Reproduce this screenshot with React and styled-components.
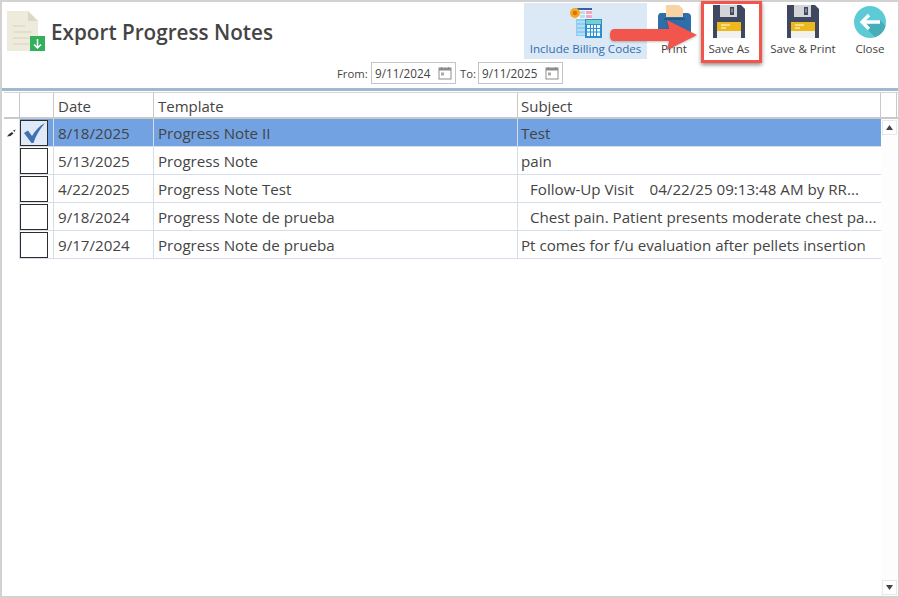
import React from "react";
import styled, { createGlobalStyle } from "styled-components";

const Global = createGlobalStyle`
  html, body { margin: 0; padding: 0; background: #fff; }
  #root { width: 899px; height: 598px; overflow: hidden; }
`;

const Window = styled.div`
  position: relative;
  box-sizing: border-box;
  width: 899px;
  height: 598px;
  border: solid #d2d2d2;
  border-width: 2px 1px 2px 2px;
  background: #fff;
  font-family: "Open Sans", "Noto Sans", sans-serif;
  color: #444;
  display: flex;
  flex-direction: column;
`;

const Header = styled.header`
  height: 86px;
  flex: none;
  border-bottom: 3px solid #a0b8d2;
  display: flex;
  flex-direction: column;
`;

const TopRow = styled.div`
  height: 59px;
  display: flex;
  justify-content: space-between;
  padding-top: 1px;
`;

const TitleGroup = styled.div`
  display: flex;
  align-items: flex-start;
  padding: 8px 0 0 5px;
  gap: 5px;
`;

const Title = styled.h1`
  margin: 6px 0 0;
  font-size: 20.7px;
  line-height: 30px;
  font-weight: 600;
  color: #444;
`;

const Toolbar = styled.div`
  display: flex;
  padding-right: 7px;
`;

const ToolButton = styled.div`
  width: ${(p) => p.$w}px;
  height: 56px;
  display: flex;
  flex-direction: column;
  align-items: center;
  background: ${(p) => (p.$active ? "#dbe8f6" : "transparent")};
  color: ${(p) => (p.$active ? "#2f6fb0" : "#444")};
  font-size: 11.6px;
  line-height: 16px;
  white-space: nowrap;
`;

const ToolIcon = styled.div`
  box-sizing: border-box;
  height: 38px;
  padding-top: ${(p) => p.$top}px;
  display: flex;
  align-items: flex-start;
  justify-content: center;
`;

const DateRow = styled.div`
  display: flex;
  justify-content: center;
  align-items: center;
  height: 22px;
  font-size: 11.3px;
  color: #444;
`;

const DateLabel = styled.span`
  width: ${(p) => p.$w}px;
  margin-left: ${(p) => p.$gap || 0}px;
`;

const DateBox = styled.div`
  box-sizing: border-box;
  width: 85px;
  height: 22px;
  border: 1px solid #c4c4c4;
  display: flex;
  align-items: center;
  justify-content: space-between;
  padding: 0 3px;
  font-size: 11.7px;
`;

const Grid = styled.div`
  flex: 1;
  position: relative;
  display: flex;
  flex-direction: column;
  margin-top: 1px;
  padding-left: 2px;
`;

const HeadRow = styled.div`
  display: grid;
  grid-template-columns: 16px 34px 100px 364px 363px 16px;
  height: 24px;
  border-top: 1px solid #d5d5d5;
  border-bottom: 2px solid #c9c9c9;
`;

const HeadCell = styled.div`
  box-sizing: border-box;
  border-right: 1px solid #c9c9c9;
  padding-left: ${(p) => p.$pad ?? 4}px;
  font-size: 15px;
  line-height: 26px;
  color: #444;
`;

const BodyWrap = styled.div`
  display: flex;
  flex: 1;
`;

const Rows = styled.div`
  width: 877px;
`;

const Row = styled.div`
  display: grid;
  grid-template-columns: 16px 34px 100px 364px 363px;
  height: 28px;
`;

const IndicatorCell = styled.div`
  display: flex;
  align-items: center;
  justify-content: center;
  padding-right: 1px;
  border-right: 1px solid #d5dde8;
  box-sizing: border-box;
`;

const CheckCell = styled.div`
  box-sizing: border-box;
  display: flex;
  align-items: center;
  border-right: 1px solid #d5dde8;
  border-bottom: 1px solid #d5dde8;
  background: ${(p) => (p.$sel ? "#72a2e1" : "#fff")};
`;

const CheckBox = styled.div`
  box-sizing: border-box;
  width: 28px;
  height: 26px;
  border: 1px solid #2c2c2c;
  background: ${(p) => (p.$on ? "#dfe9f7" : "#fff")};
  display: flex;
  align-items: center;
  justify-content: center;
`;

const Cell = styled.div`
  box-sizing: border-box;
  padding-left: ${(p) => p.$pad ?? 4}px;
  font-size: 15.15px;
  line-height: 28px;
  color: #444;
  white-space: pre;
  overflow: hidden;
  background: ${(p) => (p.$sel ? "#72a2e1" : "#fff")};
  border-right: ${(p) => (p.$last ? "0" : "1px solid #d5dde8")};
  border-bottom: 1px solid #d5dde8;
`;

const Scrollbar = styled.div`
  width: 16px;
  display: flex;
  flex-direction: column;
  justify-content: space-between;
  background: #fdfdfd;
  padding: 1px 0;
`;

const ScrollButton = styled.div`
  box-sizing: border-box;
  width: 15px;
  height: 15px;
  margin-left: 1px;
  border: 1px solid #e9e9e9;
  background: #fff;
  display: flex;
  align-items: center;
  justify-content: center;
`;

const Callout = styled.div`
  position: absolute;
  left: 699px;
  top: -1px;
  width: 61px;
  height: 62px;
  box-sizing: border-box;
  border: 3px solid #f2554c;
  box-shadow: 0 2px 4px rgba(0, 0, 0, 0.45);
`;

const ArrowMark = styled.svg`
  position: absolute;
  left: 606px;
  top: 18px;
  filter: drop-shadow(0 1px 1px rgba(0, 0, 0, 0.25));
`;

const DocIcon = () => (
  <svg width="39" height="42" viewBox="0 0 39 42">
    <path d="M0 0H21L31 10V40H0Z" fill="#eeebdd" />
    <path d="M21 0L31 10H21Z" fill="#dcd8c6" />
    <path d="M6 15H18M6 21H25M6 27H25M6 33H25" stroke="#dfdbc9" strokeWidth="1.5" />
    <rect x="23" y="25" width="15" height="15" fill="#33b05c" />
    <path d="M30.500 28V37M27 33.500L30.500 37L34 33.500" stroke="#fff" strokeWidth="1.500" fill="none" />
  </svg>
);

const BillingIcon = () => (
  <svg width="32" height="30" viewBox="0 0 32 30">
    <rect x="7" y="0" width="15" height="12" fill="#f5f7fa" />
    <rect x="7" y="0" width="15" height="2" fill="#3b5f9e" />
    <path d="M16 3H22V6H16ZM16 7H22V10H16Z" fill="#f2a8c4" />
    <path d="M10 3H15V6H10ZM10 7H15V10H10Z" fill="#b9ddf2" />
    <circle cx="5" cy="5" r="5" fill="#f3a81f" />
    <circle cx="5" cy="5" r="2.200" fill="#d9730d" />
    <path d="M6 11H19V28H6Z" fill="#8fcdf0" />
    <path d="M7 14H19M7 18H19M7 22H19M7 26H19" stroke="#d8eefa" strokeWidth="1" />
    <rect x="15" y="11" width="17" height="19" fill="#2d8ed0" />
    <rect x="16" y="12" width="15" height="4" fill="#74d0cf" />
    <path d="M17 17H30V28H17Z" fill="#eef8fd" />
    <path d="M20.500 17V28M23.500 17V28M26.500 17V28M17 20.500H30M17 24H30" stroke="#2d8ed0" strokeWidth="1" />
  </svg>
);

const PrintIcon = () => (
  <svg width="33" height="33" viewBox="0 0 33 33">
    <path d="M3 8H29Q33 8 33 12V33H0V12Q0 8 3 8Z" fill="#2f6ea8" />
    <path d="M8 0H21L25 4V12H8Z" fill="#f8d3a6" />
    <path d="M6 13H27V15H6Z" fill="#24598b" />
    <path d="M8 25H25V33H8Z" fill="#f8d3a6" />
  </svg>
);

const SaveIcon = () => (
  <svg width="32" height="33" viewBox="0 0 32 33">
    <path d="M0 0H28L32 4V33H0Z" fill="#3f4860" />
    <path d="M7 0H24V12H7Z" fill="#d4d5d8" />
    <rect x="17" y="2" width="4" height="8" fill="#3f4860" />
    <rect x="18.300" y="3.500" width="1.500" height="4" fill="#9b9ea8" />
    <rect x="4" y="17" width="24" height="16" fill="#f1f1f1" />
    <rect x="4" y="17" width="24" height="9" fill="#ecb81b" />
    <path d="M8 20H17M8 23H13" stroke="#fbeab0" strokeWidth="1.300" />
  </svg>
);

const CloseIcon = () => (
  <svg width="32" height="32" viewBox="0 0 32 32">
    <circle cx="16" cy="16" r="16" fill="#5ccbd6" />
    <path d="M10 20L26 14L31.500 20A16 16 0 0 1 21 31.200Z" fill="#46adb9" />
    <path d="M8 16H26M15 9L8 16L15 23" stroke="#fff" strokeWidth="3.300" fill="none" />
  </svg>
);

const CalendarIcon = () => (
  <svg width="14" height="14" viewBox="0 0 14 14">
    <rect x="1" y="2" width="12" height="11" fill="none" stroke="#8d8d8d" strokeWidth="1" />
    <rect x="1" y="2" width="12" height="2.500" fill="#8d8d8d" />
    <rect x="3" y="6.500" width="3" height="3" fill="#a9a9a9" />
    <path d="M3.500 1V3M10.500 1V3" stroke="#8d8d8d" />
  </svg>
);

const PencilIcon = () => (
  <svg width="9" height="8" viewBox="0 0 9 8">
    <path d="M0 7.500L2 5L5 3L6.500 4.500L3.500 7Z" fill="#333" />
    <path d="M6 1.500L8.500 0.500L7.500 3Z" fill="#333" />
  </svg>
);

const CheckMark = () => (
  <svg width="21" height="20" viewBox="0 0 21 20">
    <path d="M0 10L4 7.500L8 13C11 8 15 3 21 0C16 6 12 12 9.500 20H7.500Z" fill="#3e72b0" />
  </svg>
);

const tools = [
  { label: "Include Billing Codes", w: 123, top: 5, active: true, icon: <BillingIcon /> },
  { label: "Print", w: 54, top: 2, icon: <PrintIcon /> },
  { label: "Save As", w: 56, top: 2, icon: <SaveIcon /> },
  { label: "Save & Print", w: 92, top: 2, icon: <SaveIcon /> },
  { label: "Close", w: 42, top: 3, icon: <CloseIcon /> },
];

const notes = [
  { date: "8/18/2025", template: "Progress Note II", subject: "Test", sel: true },
  { date: "5/13/2025", template: "Progress Note", subject: "pain" },
  { date: "4/22/2025", template: "Progress Note Test", subject: "Follow-Up Visit    04/22/25 09:13:48 AM by RR...", pad: 12 },
  { date: "9/18/2024", template: "Progress Note de prueba", subject: "Chest pain. Patient presents moderate chest pa...", pad: 12 },
  { date: "9/17/2024", template: "Progress Note de prueba", subject: "Pt comes for f/u evaluation after pellets insertion" },
];

export default function App() {
  return (
    <Window>
      <Global />
      <Header>
        <TopRow>
          <TitleGroup>
            <DocIcon />
            <Title>Export Progress Notes</Title>
          </TitleGroup>
          <Toolbar>
            {tools.map((t) => (
              <ToolButton key={t.label} $w={t.w} $active={t.active}>
                <ToolIcon $top={t.top}>{t.icon}</ToolIcon>
                {t.label}
              </ToolButton>
            ))}
          </Toolbar>
        </TopRow>
        <DateRow>
          <DateLabel $w={34}>From:</DateLabel>
          <DateBox>9/11/2024<CalendarIcon /></DateBox>
          <DateLabel $w={18} $gap={4}>To:</DateLabel>
          <DateBox>9/11/2025<CalendarIcon /></DateBox>
        </DateRow>
      </Header>
      <Grid>
        <HeadRow>
          <HeadCell />
          <HeadCell />
          <HeadCell>Date</HeadCell>
          <HeadCell>Template</HeadCell>
          <HeadCell $pad={3}>Subject</HeadCell>
          <HeadCell />
        </HeadRow>
        <BodyWrap>
          <Rows>
            {notes.map((n) => (
              <Row key={n.date + n.subject}>
                <IndicatorCell>{n.sel && <PencilIcon />}</IndicatorCell>
                <CheckCell $sel={n.sel}>
                  <CheckBox $on={n.sel}>{n.sel && <CheckMark />}</CheckBox>
                </CheckCell>
                <Cell $sel={n.sel}>{n.date}</Cell>
                <Cell $sel={n.sel}>{n.template}</Cell>
                <Cell $sel={n.sel} $last $pad={n.pad ?? 3}>{n.subject}</Cell>
              </Row>
            ))}
          </Rows>
          <Scrollbar>
            <ScrollButton>
              <svg width="7" height="5" viewBox="0 0 7 5"><path d="M3.500 0L7 5H0Z" fill="#444" /></svg>
            </ScrollButton>
            <ScrollButton>
              <svg width="7" height="5" viewBox="0 0 7 5"><path d="M0 0H7L3.500 5Z" fill="#444" /></svg>
            </ScrollButton>
          </Scrollbar>
        </BodyWrap>
      </Grid>
      <ArrowMark width="96" height="31" viewBox="0 0 96 31">
        <path d="M6 9H61L59 0L89 15L59 30L61 21H6Q2 21 2 15Q2 9 6 9Z" fill="#f2554c" />
      </ArrowMark>
      <Callout />
    </Window>
  );
}
